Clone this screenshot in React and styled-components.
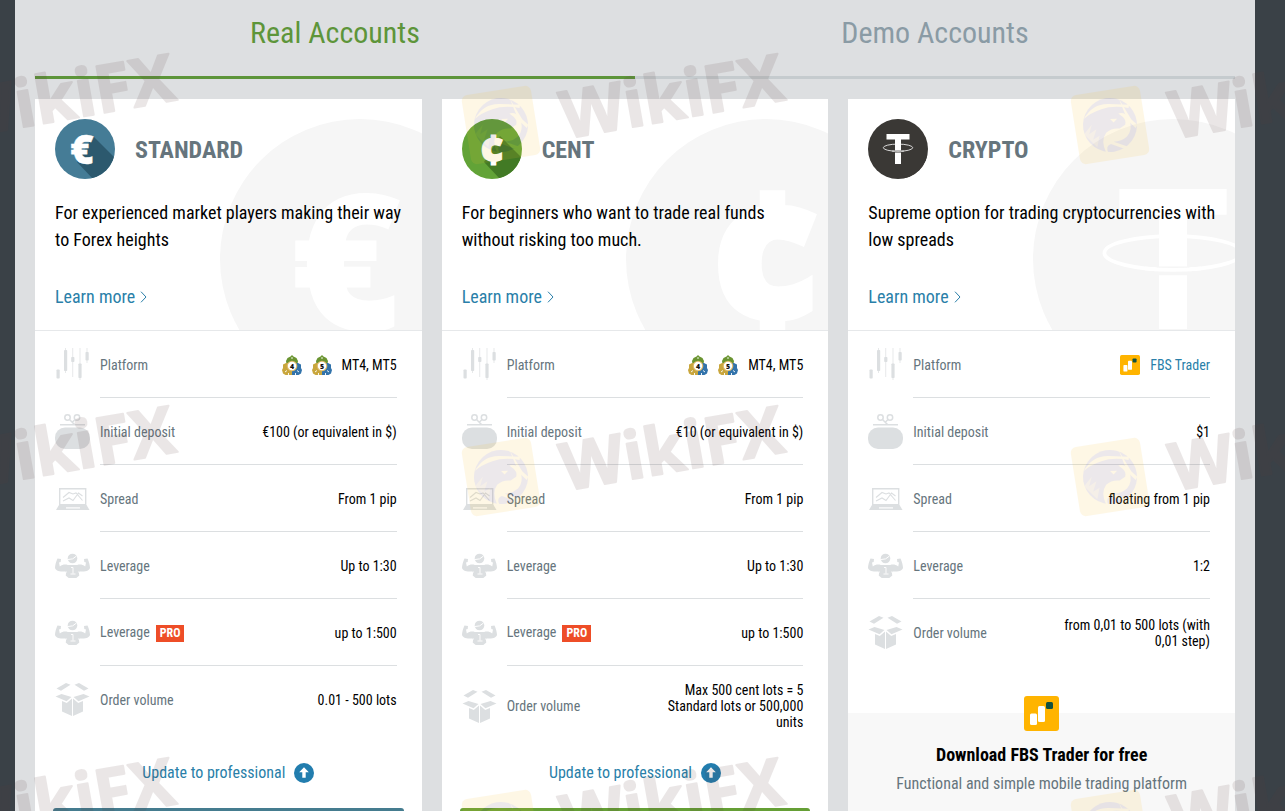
import React, { useState } from 'react'
import styled, { createGlobalStyle } from 'styled-components'

const responsive = '@media (max-width: 900px)'

const GlobalStyle = createGlobalStyle`
    * {
        box-sizing: border-box;
    }

    body {
        margin: 0;
        background-color: #3a4147;
        color: #000;
        font-family: 'Roboto Condensed', Roboto, sans-serif;
        font-size: 14px;
    }

    h2, h3, p {
        margin: 0;
    }
`;

const Page = styled.div`
    position: relative;
    height: 100vh;
    padding: 0 30px 0 15px;
    overflow: hidden;
`;

const Content = styled.main`
    min-height: 100%;
    padding: 0 20px 40px;
    background-color: #dddfe1;
`;

const Tabs = styled.div`
    display: flex;
    margin-bottom: 20px;
`;

const Tab = styled.button`
    flex: 1;
    height: 79px;
    padding: 0 0 11px;
    border: 0;
    border-bottom: 3px solid ${(props) => (props.$active ? '#5d953a' : '#c5cbce')};
    background: none;
    color: ${(props) => (props.$active ? '#5d953a' : '#8a9ba5')};
    font-family: inherit;
    font-size: 30px;
    cursor: pointer;
`;

const Cards = styled.div`
    display: grid;
    grid-template-columns: repeat(3, 1fr);
    gap: 20px;

    ${responsive} {
        grid-template-columns: 1fr;
    }
`;

const Card = styled.section`
    display: flex;
    flex-direction: column;
    background-color: #fff;
`;

const CardHead = styled.header`
    position: relative;
    padding: 20px 16px 20px 20px;
    border-bottom: 1px solid #e6e8ea;
    overflow: hidden;
`;

const Backdrop = styled.div`
    position: absolute;
    top: 20px;
    right: -78px;
    width: 280px;
    height: 280px;
`;

const HeadBody = styled.div`
    position: relative;
`;

const TitleRow = styled.div`
    display: flex;
    align-items: center;
    gap: 20px;
    height: 60px;
    margin-bottom: 20px;
`;

const CoinBox = styled.div`
    width: 60px;
    height: 60px;
`;

const Title = styled.h2`
    padding-top: 2px;
    color: #66757d;
    font-size: 24px;
    font-weight: 700;
    text-transform: uppercase;
`;

const About = styled.p`
    min-height: 84px;
    font-size: 18px;
    line-height: 27px;
`;

const Link = styled.a`
    color: #2a7fa9;
    text-decoration: none;
`;

const LearnMore = styled(Link)`
    display: flex;
    align-items: center;
    gap: 5px;
    width: fit-content;
    font-size: 18px;
    line-height: 27px;
`;

const Specs = styled.table`
    width: 100%;
    padding: 0 25px 0 20px;
    border-spacing: 0;
`;

const Row = styled.tr`
    height: 67px;

    &:not(:last-child) > :not(:first-child) {
        padding: 2px 0 0;
        border-bottom: 1px solid #dcdfe1;
    }
`;

const IconCell = styled.td`
    width: 45px;
    padding: 0;
    line-height: 0;
`;

const NameCell = styled.th`
    padding: 0;
    color: #66757d;
    font-weight: 400;
    text-align: left;
    white-space: nowrap;
`;

const ValueCell = styled.td`
    padding: 16px 0;
    line-height: 16px;
    text-align: right;
`;

const Value = styled.div`
    display: flex;
    justify-content: flex-end;
    align-items: center;
    gap: 10px;
    max-width: 150px;
    margin-left: auto;
`;

const Pro = styled.span`
    display: inline-block;
    margin-left: 6px;
    padding: 0 4px;
    background-color: #ee4d27;
    color: #fff;
    font-size: 12px;
    font-weight: 700;
    line-height: 17px;
`;

const Update = styled(Link)`
    display: flex;
    justify-content: center;
    align-items: center;
    gap: 9px;
    margin: auto 0 22px;
    padding-top: 14px;
    font-size: 16px;
    line-height: 26px;
`;

const OpenButton = styled.button`
    height: 50px;
    margin: 0 18px 20px;
    border: 0;
    border-radius: 3px;
    background-color: ${(props) => props.$color};
    cursor: pointer;
`;

const Download = styled.div`
    display: flex;
    flex: 1;
    flex-direction: column;
    align-items: center;
    margin-top: 47px;
    background-color: #f8f8f8;

    svg {
        margin-top: -17px;
    }
`;

const DownloadTitle = styled.h3`
    margin-top: 10px;
    font-size: 18px;
    font-weight: 700;
    line-height: 27px;
`;

const DownloadText = styled.p`
    margin-top: 2px;
    color: #66757d;
    font-size: 16px;
    line-height: 27px;
`;

const Watermark = styled.svg`
    position: absolute;
    inset: 0;
    width: 100%;
    height: 100%;
    pointer-events: none;
`;

const coins = {
    euro: { color: '#457c96', shade: '#2c596e' },
    cent: { color: '#62a337', shade: '#427a25' },
    tether: { color: '#3a3835', shade: '#3a3835' },
}

const CoinSign = ({ type, color }) => {
    if (type === 'tether') {
        return (
            <g>
                <path d="M18.500 15h23v5.500h-8.500v12.500h-6v-12.500h-8.500z" fill="#fff" />
                <ellipse cx="30" cy="28.700" rx="14.700" ry="3.600" fill="none" stroke="#fff" strokeWidth="0.800" />
                <path d="M26.500 31.600h7v1.400h-7z" fill={color} />
                <path d="M24 32q6 .7 12 0" fill="none" stroke="#fff" strokeWidth="0.800" />
                <path d="M27 33.500h6v11.500h-6z" fill="#fff" />
            </g>
        )
    }
    return (
        <text
            x={type === 'euro' ? 27 : 30}
            y={type === 'euro' ? 45 : 46}
            textAnchor="middle"
            fill="#fff"
            stroke="#fff"
            strokeWidth={type === 'euro' ? 0.4 : 1.2}
            fontFamily="'Open Sans', sans-serif"
            fontWeight="800"
            fontSize={type === 'euro' ? 40 : 42}
        >
            {type === 'euro' ? '€' : '¢'}
        </text>
    )
}

const Coin = ({ type, plain }) => {
    const color = plain ? '#f6f6f6' : coins[type].color
    return (
        <svg viewBox="0 0 60 60" width="100%" height="100%" aria-hidden="true">
            <clipPath id={`coin-${type}`}>
                <circle cx="30" cy="30" r="30" />
            </clipPath>
            <circle cx="30" cy="30" r="30" fill={color} />
            {!plain && (
                <path
                    d="M38 17L60 39V60H38L22 43z"
                    fill={coins[type].shade}
                    clipPath={`url(#coin-${type})`}
                />
            )}
            <CoinSign type={type} color={color} />
        </svg>
    )
}

const rowIcons = {
    candles: (
        <g>
            <path d="M10.500 1v25M17.700 1v29M25 1v32M32 1v15" stroke="#dcdfe1" strokeWidth="0.700" />
            <rect x="1.500" y="22.500" width="3.200" height="9" rx="0.800" />
            <rect x="9" y="3" width="3.200" height="21" rx="0.800" />
            <rect x="16.200" y="10" width="3.200" height="5" rx="0.800" />
            <rect x="23.400" y="16.500" width="3.200" height="14.500" rx="0.800" />
            <rect x="30.500" y="5" width="3.200" height="8.500" rx="0.800" />
        </g>
    ),
    purse: (
        <g>
            <g fill="none" stroke="#dcdfe1" strokeWidth="1.500">
                <circle cx="12.500" cy="3.500" r="2.700" />
                <circle cx="22" cy="3.500" r="2.700" />
                <path d="M14.500 5.500l5 5M20 5.500l-2.500 2.500M5 10.700h25" />
            </g>
            <rect x="0" y="13.500" width="35" height="21.500" rx="10" />
        </g>
    ),
    laptop: (
        <g>
            <path d="M4.700 7.700h26v16h-26z" fill="none" stroke="#dcdfe1" strokeWidth="1.400" />
            <path d="M8 16.500l6-5 4 1.500 3-1 6.500 7.500M8 20l6-3 4 2.500 5.500-7.500 4 3" fill="none" stroke="#dcdfe1" strokeWidth="1.100" />
            <path d="M4 24h27.500l3 5H1z" />
            <path d="M11 26.300h14v1.200h-14z" fill="#fff" />
        </g>
    ),
    strongman: (
        <g>
            <circle cx="17.500" cy="10.500" r="4.800" />
            <path d="M13 11.500q5 .5 8.500-3.500" fill="none" stroke="#fff" strokeWidth="1" />
            <path d="M2.500 10.500l3.500.5-.3 3-1.700.5.800 4c2.500-2 5.500-2.300 8-1.500h9.400c2.500-.8 5.500-.5 8 1.500l.8-4-1.700-.5-.3-3 3.500-.5c1.500 3 2.500 7 2.500 9.500-1 3-4.500 3.500-9.500 3.500l-1.700 1 .5 3-3 2.500h-7.600l-3-2.500.5-3-1.700-1c-5 0-8.500-.5-9.500-3.500 0-2.500 1-6.500 2.500-9.500z" />
            <path d="M16 19.500h2v6M15.500 26h5" fill="none" stroke="#fff" strokeWidth="0.900" />
            <path d="M9.500 24h2.500M25.500 24H23" fill="none" stroke="#fff" strokeWidth="0.700" />
        </g>
    ),
    box: (
        <g>
            <path d="M1.500 6.500L11 1l4.500 1.800L6 8.800z" />
            <path d="M33.500 6.500L24 1l-4.500 1.800 9.500 6z" />
            <path d="M.5 14.500L6.500 12l10 3-5 4.300z" />
            <path d="M34.500 14.500L28.500 12l-10 3 5 4.300z" />
            <path d="M7 19l4.800 2 5.200-4.500V34L7 29.500z" />
            <path d="M28 19l-4.800 2-5.200-4.500V34l10-4.500z" />
        </g>
    ),
}

const RowIcon = ({ name }) => (
    <svg viewBox="0 0 35 35" width="35" height="35" fill="#dcdfe1" aria-hidden="true">
        {rowIcons[name]}
    </svg>
)

const MetaTrader = ({ version }) => (
    <svg viewBox="0 0 20 20" width="20" height="20" aria-hidden="true">
        <path d="M8.500 1.500L10 0l1.500 1.500 3 1.500 1.500 3-.5 3h-11L4 6l1.500-3z" fill="#6a9430" />
        <path d="M1 9.500l3-1.500h6v12H3.500l-2.500-1.500L0 15l1-2z" fill="#c9a63c" />
        <path d="M19 9.500L16 8h-6v12h6.500l2.500-1.500 1-3.500-1-2z" fill="#3273ab" />
        <path d="M9 3h2M3 17l2-1.500M17 17l-2-1.500M6.500 20v-2M13.500 20v-2" stroke="#fff" strokeWidth="0.900" />
        <circle cx="10" cy="11" r="5.300" fill="#dcb968" />
        <circle cx="10" cy="11" r="4.200" fill="#fff" />
        <text x="10" y="13.600" textAnchor="middle" fill="#111" fontFamily="'Open Sans', sans-serif" fontSize="7" fontWeight="800">
            {version}
        </text>
    </svg>
)

const FbsTrader = ({ size }) => (
    <svg viewBox="0 0 35 35" width={size} height={size} aria-hidden="true">
        <rect width="35" height="35" rx="3" fill="#ffb400" />
        <rect x="6" y="17.500" width="7" height="11.500" rx="1.500" fill="#fff" />
        <rect x="14" y="10" width="7" height="16" rx="1.500" fill="#fff" />
        <rect x="22" y="6" width="7" height="7" rx="1.500" fill="#10503f" />
    </svg>
)

const Chevron = () => (
    <svg viewBox="0 0 7 12" width="7" height="12" aria-hidden="true">
        <path d="M1 .7L6 6l-5 5.300" fill="none" stroke="#2a7fa9" />
    </svg>
)

const UpArrow = () => (
    <svg viewBox="0 0 20 20" width="20" height="20" aria-hidden="true">
        <circle cx="10" cy="10" r="10" fill="#227dae" />
        <path d="M10 4.200l4.800 5H11.700v5.600H8.300V9.200H5.200z" fill="#fff" />
    </svg>
)

const mtPlatforms = (
    <>
        <MetaTrader version="4" />
        <MetaTrader version="5" />
        MT4, MT5
    </>
)

const accounts = [
    {
        name: 'Standard',
        coin: 'euro',
        about: 'For experienced market players making their way to Forex heights',
        button: '#457c8f',
        rows: [
            { icon: 'candles', name: 'Platform', value: mtPlatforms },
            { icon: 'purse', name: 'Initial deposit', value: '€100 (or equivalent in $)' },
            { icon: 'laptop', name: 'Spread', value: 'From 1 pip' },
            { icon: 'strongman', name: 'Leverage', value: 'Up to 1:30' },
            { icon: 'strongman', name: 'Leverage', pro: true, value: 'up to 1:500' },
            { icon: 'box', name: 'Order volume', value: '0.01 - 500 lots' },
        ],
    },
    {
        name: 'Cent',
        coin: 'cent',
        about: 'For beginners who want to trade real funds without risking too much.',
        button: '#659f35',
        rows: [
            { icon: 'candles', name: 'Platform', value: mtPlatforms },
            { icon: 'purse', name: 'Initial deposit', value: '€10 (or equivalent in $)' },
            { icon: 'laptop', name: 'Spread', value: 'From 1 pip' },
            { icon: 'strongman', name: 'Leverage', value: 'Up to 1:30' },
            { icon: 'strongman', name: 'Leverage', pro: true, value: 'up to 1:500' },
            { icon: 'box', name: 'Order volume', value: 'Max 500 cent lots = 5 Standard lots or 500,000 units' },
        ],
    },
    {
        name: 'Crypto',
        coin: 'tether',
        about: 'Supreme option for trading cryptocurrencies with low spreads',
        rows: [
            {
                icon: 'candles',
                name: 'Platform',
                value: (
                    <>
                        <FbsTrader size={20} />
                        <Link href="#trader">FBS Trader</Link>
                    </>
                ),
            },
            { icon: 'purse', name: 'Initial deposit', value: '$1' },
            { icon: 'laptop', name: 'Spread', value: 'floating from 1 pip' },
            { icon: 'strongman', name: 'Leverage', value: '1:2' },
            { icon: 'box', name: 'Order volume', value: 'from 0,01 to 500 lots (with 0,01 step)' },
        ],
    },
]

const AccountCard = ({ account }) => (
    <Card>
        <CardHead>
            <Backdrop>
                <Coin type={account.coin} plain />
            </Backdrop>
            <HeadBody>
                <TitleRow>
                    <CoinBox>
                        <Coin type={account.coin} />
                    </CoinBox>
                    <Title>{account.name}</Title>
                </TitleRow>
                <About>{account.about}</About>
                <LearnMore href={`#${account.name.toLowerCase()}`}>
                    Learn more
                    <Chevron />
                </LearnMore>
            </HeadBody>
        </CardHead>
        <Specs>
            <tbody>
                {account.rows.map((row, i) => (
                    <Row key={i}>
                        <IconCell><RowIcon name={row.icon} /></IconCell>
                        <NameCell scope="row">
                            {row.name}
                            {row.pro && <Pro>PRO</Pro>}
                        </NameCell>
                        <ValueCell><Value>{row.value}</Value></ValueCell>
                    </Row>
                ))}
            </tbody>
        </Specs>
        {account.button ? (
            <>
                <Update href="#professional">
                    Update to professional
                    <UpArrow />
                </Update>
                <OpenButton $color={account.button} aria-label={`Open ${account.name} account`} />
            </>
        ) : (
            <Download>
                <FbsTrader size={35} />
                <DownloadTitle>Download FBS Trader for free</DownloadTitle>
                <DownloadText>Functional and simple mobile trading platform</DownloadText>
            </Download>
        )}
    </Card>
)

// one stamp: eagle badge and the brand name, both tilted
const Stamp = ({ x, y }) => (
    <g transform={`translate(${x} ${y})`} opacity="0.12">
        <g transform="translate(501 125) rotate(-9)">
            <rect x="-35" y="-35" width="70" height="70" rx="6" fill="#f8c030" />
            <circle r="27" fill="#6d4a62" />
            <g fill="#f8c030">
                <path d="M-25-10Q-14-24 2-21L22-17 21-14Q6-19-6-17-18-15-25-10z" />
                <path d="M13-24L22-2 27 4 25 7 18-2z" />
                <path d="M-8 27Q-12 14-5 7 1 3 9 5L15 2Q17-2 14-6L10-10Q17-11 20-3 22 8 15 14 9 18 1 17L14 24 11 26-2 19Q-8 20-6 27z" />
                <path d="M1-6L8-5 4-2z" />
                <path d="M-27 5L-18-3-22 6-14 2-19 12-12 9-16 20z" opacity="0.500" />
            </g>
        </g>
        <text
            transform="translate(565 139) rotate(-10)"
            fill="#5a3c3c"
            stroke="#5a3c3c"
            strokeWidth="2"
            strokeLinejoin="round"
            fontFamily="'Open Sans', sans-serif"
            fontSize="66"
            fontWeight="700"
        >
            WikiFX
        </text>
    </g>
)

const App = () => {
    const [tab, setTab] = useState('real')

    return (
        <Page>
            <GlobalStyle />
            <Content>
                <Tabs role="tablist">
                    <Tab role="tab" aria-selected={tab === 'real'} $active={tab === 'real'} onClick={() => setTab('real')}>
                        Real Accounts
                    </Tab>
                    <Tab role="tab" aria-selected={tab === 'demo'} $active={tab === 'demo'} onClick={() => setTab('demo')}>
                        Demo Accounts
                    </Tab>
                </Tabs>
                <Cards>
                    {accounts.map(account =>
                        <AccountCard key={account.name} account={account} />
                    )}
                </Cards>
            </Content>
            <Watermark aria-hidden="true">
                {[0, 352, 704].map(y =>
                    [-609, 0, 609].map(x => <Stamp key={`${x} ${y}`} x={x} y={y} />)
                )}
            </Watermark>
        </Page>
    )
}

export default App
